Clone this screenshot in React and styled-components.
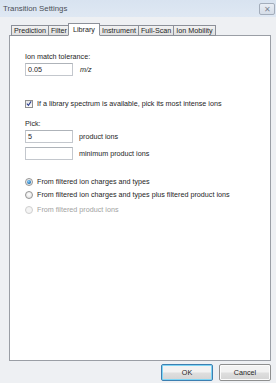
import React from 'react';
import styled, {createGlobalStyle} from 'styled-components';

const Global = createGlobalStyle`
  *, *::before, *::after {
    box-sizing: border-box;
  }
  html, body {
    margin: 0;
    padding: 0;
    background: #eef0f3;
  }
  body {
    font-family: "Liberation Sans", Arial, sans-serif;
    font-size: 7.2px;
    color: #1e1e1e;
  }
`;

const Window = styled.div`
  width: 276px;
  height: 383px;
  display: flex;
  flex-direction: column;
  background: #eef0f3;
  overflow: hidden;
`;

const TitleBar = styled.div`
  height: 17px;
  flex: none;
  display: flex;
  align-items: center;
  justify-content: space-between;
  padding: 0 1px 0 3px;
  background: linear-gradient(#d8e3f0, #dfe8f3);
  color: #4a4f57;
  font-size: 7.8px;
`;

const CloseButton = styled.div`
  width: 16px;
  height: 12px;
  border: 1px solid #a3adbb;
  border-radius: 2px;
  background: linear-gradient(#e9eef5, #d5dde8);
  display: flex;
  align-items: center;
  justify-content: center;
  color: #7f8894;
  font-size: 8px;
  margin-top: 1px;
`;

const Body = styled.div`
  flex: 1;
  display: flex;
  flex-direction: column;
  padding: 6px 5px 3px 9px;
`;

const TabStrip = styled.div`
  display: flex;
  align-items: flex-end;
  height: 13px;
  padding-left: 2px;
  margin-bottom: -1px;
  position: relative;
  z-index: 1;
`;

const Tab = styled.div`
  height: ${p => (p.$active ? '13px' : '11px')};
  padding: 0 ${p => (p.$active ? '4px' : '2px')};
  margin: 0 -1px 0 ${p => (p.$active ? '-1px' : '0')};
  border: 1px solid #8c9099;
  border-bottom-color: ${p => (p.$active ? '#fff' : '#8c9099')};
  background: ${p => (p.$active ? '#fff' : 'linear-gradient(#f2f2f2, #e0e0e0)')};
  display: flex;
  align-items: center;
  color: #1e1e1e;
  font-size: 7.2px;
  line-height: 1;
  position: relative;
  z-index: ${p => (p.$active ? 2 : 1)};
`;

const Panel = styled.div`
  height: 326px;
  border: 1px solid #9a9ea5;
  background: #fff;
  padding: 16px 16px 0 15px;
  display: flex;
  flex-direction: column;
`;

const Label = styled.div`
  height: 10px;
  line-height: 10px;
`;

const Row = styled.div`
  display: flex;
  align-items: center;
  gap: 6px;
  margin-top: ${p => p.$top || 0}px;
`;

const Input = styled.div`
  width: 48px;
  height: 13px;
  border: 1px solid #c3c7cd;
  border-top-color: #aeb3b9;
  padding-left: 2px;
  line-height: 11px;
  background: #fff;
`;

const Unit = styled.span`
  font-style: italic;
  margin-left: 1px;
`;

const CheckBox = styled.div`
  width: 8px;
  height: 8px;
  border: 1px solid #8f8f8f;
  background: linear-gradient(#e6e6e6, #fafafa);
  display: flex;
  align-items: center;
  justify-content: center;
  margin-right: -2px;
`;

const Radio = styled.div`
  width: 8px;
  height: 8px;
  border-radius: 50%;
  border: 1px solid ${p => (p.$disabled ? '#cfcfcf' : '#959595')};
  background: ${p =>
    p.$disabled ? '#f4f4f4' : 'radial-gradient(circle at 50% 40%, #fff, #dcdcdc)'};
  display: flex;
  align-items: center;
  justify-content: center;
  margin-right: -2px;
`;

const Dot = styled.div`
  width: 4px;
  height: 4px;
  border-radius: 50%;
  background: radial-gradient(circle at 40% 35%, #8fd3ff, #1a6fb3 70%, #0d4f8a);
`;

const Text = styled.span`
  color: ${p => (p.$disabled ? '#a2a2a2' : '#1e1e1e')};
`;

const Footer = styled.div`
  display: flex;
  justify-content: flex-end;
  gap: 6px;
  padding: 3px 0 0;
`;

const Button = styled.div`
  width: 52px;
  height: 17px;
  border: 1px solid ${p => (p.$default ? '#3c7fb1' : '#8e8f8f')};
  border-radius: 2px;
  background: linear-gradient(#f2f2f2 45%, #dedede 55%, #d4d4d4);
  box-shadow: ${p => (p.$default ? 'inset 0 0 0 1px #7fd6f6' : 'inset 0 0 0 1px #fbfbfb')};
  display: flex;
  align-items: center;
  justify-content: center;
  font-size: 7.2px;
  color: #1e1e1e;
`;

const tabs = ['Prediction', 'Filter', 'Library', 'Instrument', 'Full-Scan', 'Ion Mobility'];

function Check() {
  return (
    <svg width="7" height="7" viewBox="0 0 7 7">
      <path d="M1 3.6 L2.8 5.6 L6 1" fill="none" stroke="#2a3d8f" strokeWidth="1.2" />
    </svg>
  );
}

export default function App() {
  return (
    <Window>
      <Global />
      <TitleBar>
        <span>Transition Settings</span>
        <CloseButton>✕</CloseButton>
      </TitleBar>
      <Body>
        <TabStrip>
          {tabs.map(t => (
            <Tab key={t} $active={t === 'Library'}>{t}</Tab>
          ))}
        </TabStrip>
        <Panel>
          <Label>Ion match tolerance:</Label>
          <Row $top={1}>
            <Input>0.05</Input>
            <Unit>m/z</Unit>
          </Row>
          <Row $top={23}>
            <CheckBox><Check /></CheckBox>
            <Text>If a library spectrum is available, pick its most intense ions</Text>
          </Row>
          <Row $top={11}>
            <Label>Pick:</Label>
          </Row>
          <Row $top={1}>
            <Input>5</Input>
            <Text>product ions</Text>
          </Row>
          <Row $top={4}>
            <Input />
            <Text>minimum product ions</Text>
          </Row>
          <Row $top={17}>
            <Radio><Dot /></Radio>
            <Text>From filtered ion charges and types</Text>
          </Row>
          <Row $top={4}>
            <Radio />
            <Text>From filtered ion charges and types plus filtered product ions</Text>
          </Row>
          <Row $top={6}>
            <Radio $disabled />
            <Text $disabled>From filtered product ions</Text>
          </Row>
        </Panel>
        <Footer>
          <Button $default>OK</Button>
          <Button>Cancel</Button>
        </Footer>
      </Body>
    </Window>
  );
}
